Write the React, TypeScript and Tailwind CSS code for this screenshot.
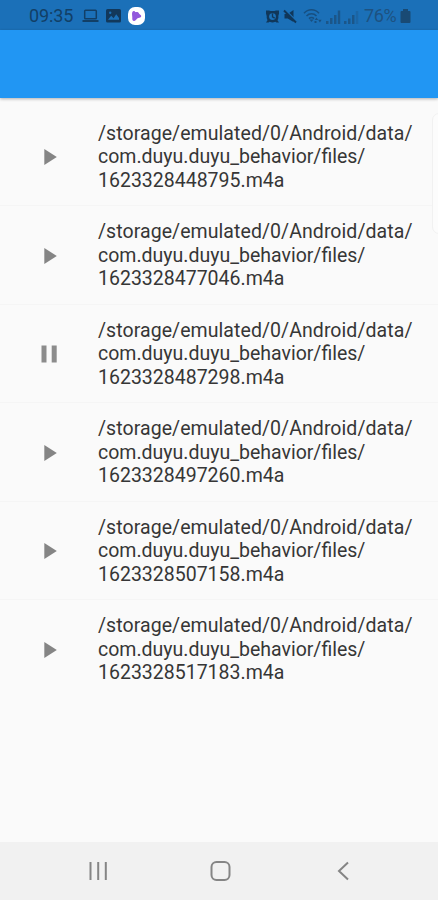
const DIR = ['/storage/emulated/0/Android/data/', 'com.duyu.duyu_behavior/files/']

const recordings = [
  { id: '1623328448795', playing: false },
  { id: '1623328477046', playing: false },
  { id: '1623328487298', playing: true },
  { id: '1623328497260', playing: false },
  { id: '1623328507158', playing: false },
  { id: '1623328517183', playing: false },
]

function StatusBar() {
  return (
    <div className="flex h-[30px] items-center justify-between bg-[#1b70b8] pl-[29px] pr-[27px] pt-[2px] text-[#123f66]">
      <div className="flex items-center">
        <span className="w-[53px] text-[18px] leading-none tracking-[-0.1px]">09:35</span>
        <svg width="17" height="14" viewBox="0 0 17 14" fill="none" stroke="currentColor" strokeWidth="1.5">
          <rect x="2.7" y="1.2" width="11.6" height="8.6" rx="0.8" />
          <path d="M0.5 12h16" strokeWidth="2" />
        </svg>
        <svg className="ml-[7px]" width="15" height="14" viewBox="0 0 15 14">
          <rect width="15" height="13.5" rx="1.6" fill="#12385b" />
          <path d="M2 10.8l3.2-4 2.4 2.5 2.6-4L13 9v1.8z" fill="#1b70b8" />
          <circle cx="4.2" cy="3.7" r="1.2" fill="#1b70b8" />
        </svg>
        <svg className="ml-[7px]" width="17" height="18" viewBox="0 0 17 18">
          <rect width="17" height="18" rx="7" fill="#fff" />
          <path d="M4.5 4.7c.8-1.2 2.3-.8 2.8.4 1 .2 1.7-.3 2.7.2 1 .5.8 1.4 1.7 2 1.3.8 2 1.8 1.2 2.7-.9 1-2.2.6-3.3 1.2-1.2.7-1.7 2.5-3.3 2.7-1.8.2-2.2-1.5-2-3.2.1-2-.8-4.3.2-6z" fill="#9257dc" />
        </svg>
      </div>
      <div className="flex items-center">
        <svg width="15" height="15" viewBox="0 0 15 15" fill="none">
          <path d="M1 1.5h3L5.5 2h4L11 1.5h3v3L13.3 7c.3 1.5 0 3-.8 4.2L14 13.5h-2.5l-1.2-.7a6 6 0 0 1-5.6 0l-1.2.7H1l1.5-2.3A6 6 0 0 1 1.7 7L1 4.5z" fill="#10375a" />
          <circle cx="7.5" cy="7.6" r="3.4" fill="#1b70b8" />
          <path d="M7.5 4.5v3.3l2.2 1.3" stroke="#10375a" strokeWidth="1.3" />
        </svg>
        <svg className="ml-[3px]" width="15" height="15" viewBox="0 0 15 15">
          <path d="M1.5 5h3.2l5.8-4v12L4.7 9.5H1.5z" fill="#10375a" />
          <path d="M2.5 1L14 12.5" stroke="#1b70b8" strokeWidth="1.5" />
          <path d="M1 1.5L13 13.5" stroke="#10375a" strokeWidth="1.9" />
        </svg>
        <svg className="ml-[5px]" width="20" height="16" viewBox="0 0 20 16" fill="none" stroke="#174f80" strokeWidth="1.5">
          <path d="M1 5.2c4-4.7 11-4.7 15 0M3.5 8c2.800-3 7.200-3 10 0M6 10.600c1.500-1.500 3.500-1.500 5 0" />
          <path d="M8.5 14l-2-2.400h4z" fill="#174f80" stroke="none" />
          <path d="M13.500 9.500l1.700 2.500h-3.400zM16.900 14.500l1.700-2.700h-3.400zM11.500 13h2v2h-2z" fill="#174f80" stroke="none" />
        </svg>
        <svg className="ml-[3px]" width="15" height="15" viewBox="0 0 15 15" fill="#1b5689">
          <path d="M0 12h2.500v3H0zM4 9h2.500v6H4zM8 6h2.500v9H8zM11.800 1.500h2.400v13.500h-2.400z" />
        </svg>
        <svg className="ml-[3px]" width="15" height="15" viewBox="0 0 15 15" fill="#1b5689">
          <path d="M0 12h2.500v3H0zM4 9.500h2.500V15H4zM8 6h2.500v9H8z" />
          <path d="M11.800 2h2.400v13h-2.400z" opacity="0.4" />
        </svg>
        <span className="ml-[5px] w-[34px] whitespace-nowrap text-[18px] leading-none tracking-[-0.4px] text-[#1d5281]">76%</span>
        <svg className="ml-[2px]" width="11" height="15" viewBox="0 0 11 15" fill="#194a74">
          <path d="M3 0h5v2h1.500a1 1 0 0 1 1 1v10a1 1 0 0 1-1 1h-8a1 1 0 0 1-1-1V3a1 1 0 0 1 1-1H3z" />
        </svg>
      </div>
    </div>
  )
}

function PlayIcon() {
  return (
    <svg width="13" height="16" viewBox="0 0 13 16" fill="#858585">
      <path d="M0.3 0v16L12.8 8z" />
    </svg>
  )
}

function PauseIcon() {
  return (
    <svg className="-ml-[3px]" width="17" height="18" viewBox="0 0 17 18" fill="#8c8c8c">
      <path d="M0.5 0.5h5v17h-5zM10.7 0.5h5v17h-5z" />
    </svg>
  )
}

export default function App() {
  return (
    <div className="relative flex h-[900px] w-[438px] flex-col overflow-hidden bg-[#fafafa] font-['Roboto',sans-serif]">
      <StatusBar />
      <header className="z-10 h-[67.5px] shrink-0 bg-[#2196f3] shadow-[0_1px_3px_rgba(0,0,0,0.3)]" />
      <ul className="flex-1 pt-[10px]">
        {recordings.map(({ id, playing }) => (
          <li key={id} className="flex h-[98.5px] items-center border-b border-[#f5f5f5] pt-[1.5px] last:border-transparent">
            <button className="flex w-[98px] shrink-0 pl-[44px]" aria-label={playing ? 'Pause' : 'Play'}>
              {playing ? <PauseIcon /> : <PlayIcon />}
            </button>
            <div className="whitespace-nowrap text-[19.5px] leading-[23.5px] text-[#363636]">
              {DIR.map((part) => (
                <div key={part} className="first:tracking-[0.065px]">{part}</div>
              ))}
              <div>{id}.m4a</div>
            </div>
          </li>
        ))}
      </ul>
      {/* edge panel handle */}
      <div className="absolute -right-[8px] top-[113px] h-[121px] w-[14px] rounded-[7px] border border-[#f1f1f1] bg-[#fcfcfc]" />
      <nav className="flex h-[58px] shrink-0 items-center bg-[#f1f1f1] pl-[89px] text-[#858585]">
        <svg width="19" height="20" viewBox="0 0 19 20" stroke="currentColor" strokeWidth="2">
          <path d="M1.5 1v18M9.2 1v18M16.8 1v18" />
        </svg>
        <svg className="ml-[102px]" width="21" height="21" viewBox="0 0 21 21" fill="none" stroke="currentColor" strokeWidth="2">
          <rect x="1.5" y="1" width="18" height="18" rx="5" />
        </svg>
        <svg className="ml-[106px]" width="12" height="20" viewBox="0 0 12 20" fill="none" stroke="currentColor" strokeWidth="2">
          <path d="M11 1.5L2 10l9 8.5" />
        </svg>
      </nav>
    </div>
  )
}
